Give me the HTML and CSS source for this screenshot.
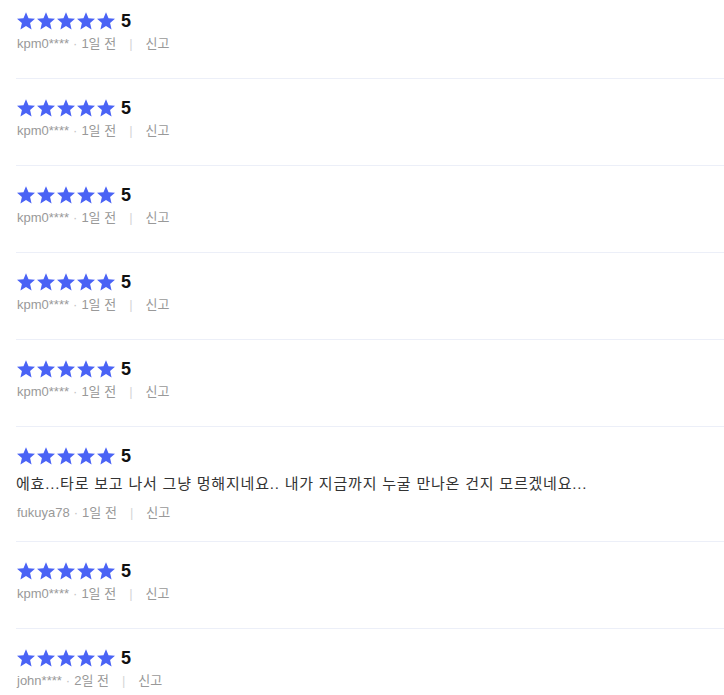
FILE: index.html
```html
<!DOCTYPE html>
<html lang="ko">

<head>
    <meta charset="utf-8">
    <title>리뷰</title>
    <link rel="stylesheet" href="styles.css">
</head>

<body>
    <svg class="defs" width="0" height="0">
        <symbol id="star" viewBox="2 2 20 19.3">
            <path d="M12 17.27L18.18 21l-1.64-7.03L22 9.24l-7.19-.61L12 2 9.19 8.63 2 9.24l5.46 4.73L5.82 21z" />
        </symbol>
    </svg>

    <ul class="review-list">
        <li class="review">
            <div class="rating">
                <span class="stars">
                    <svg class="star"><use href="#star" /></svg><svg class="star"><use href="#star" /></svg><svg class="star"><use href="#star" /></svg><svg class="star"><use href="#star" /></svg><svg class="star"><use href="#star" /></svg>
                </span>
                <span class="score">5</span>
            </div>
            <div class="meta"><span class="user">kpm0****</span><span class="dot">·</span><span>1일 전</span><span class="bar">|</span><a class="report" href="#">신고</a></div>
        </li>
        <li class="review">
            <div class="rating">
                <span class="stars">
                    <svg class="star"><use href="#star" /></svg><svg class="star"><use href="#star" /></svg><svg class="star"><use href="#star" /></svg><svg class="star"><use href="#star" /></svg><svg class="star"><use href="#star" /></svg>
                </span>
                <span class="score">5</span>
            </div>
            <div class="meta"><span class="user">kpm0****</span><span class="dot">·</span><span>1일 전</span><span class="bar">|</span><a class="report" href="#">신고</a></div>
        </li>
        <li class="review">
            <div class="rating">
                <span class="stars">
                    <svg class="star"><use href="#star" /></svg><svg class="star"><use href="#star" /></svg><svg class="star"><use href="#star" /></svg><svg class="star"><use href="#star" /></svg><svg class="star"><use href="#star" /></svg>
                </span>
                <span class="score">5</span>
            </div>
            <div class="meta"><span class="user">kpm0****</span><span class="dot">·</span><span>1일 전</span><span class="bar">|</span><a class="report" href="#">신고</a></div>
        </li>
        <li class="review">
            <div class="rating">
                <span class="stars">
                    <svg class="star"><use href="#star" /></svg><svg class="star"><use href="#star" /></svg><svg class="star"><use href="#star" /></svg><svg class="star"><use href="#star" /></svg><svg class="star"><use href="#star" /></svg>
                </span>
                <span class="score">5</span>
            </div>
            <div class="meta"><span class="user">kpm0****</span><span class="dot">·</span><span>1일 전</span><span class="bar">|</span><a class="report" href="#">신고</a></div>
        </li>
        <li class="review">
            <div class="rating">
                <span class="stars">
                    <svg class="star"><use href="#star" /></svg><svg class="star"><use href="#star" /></svg><svg class="star"><use href="#star" /></svg><svg class="star"><use href="#star" /></svg><svg class="star"><use href="#star" /></svg>
                </span>
                <span class="score">5</span>
            </div>
            <div class="meta"><span class="user">kpm0****</span><span class="dot">·</span><span>1일 전</span><span class="bar">|</span><a class="report" href="#">신고</a></div>
        </li>
        <li class="review has-text">
            <div class="rating">
                <span class="stars">
                    <svg class="star"><use href="#star" /></svg><svg class="star"><use href="#star" /></svg><svg class="star"><use href="#star" /></svg><svg class="star"><use href="#star" /></svg><svg class="star"><use href="#star" /></svg>
                </span>
                <span class="score">5</span>
            </div>
            <p class="review-text">에효...타로 보고 나서 그냥 멍해지네요.. 내가 지금까지 누굴 만나온 건지 모르겠네요...</p>
            <div class="meta"><span class="user">fukuya78</span><span class="dot">·</span><span>1일 전</span><span class="bar">|</span><a class="report" href="#">신고</a></div>
        </li>
        <li class="review">
            <div class="rating">
                <span class="stars">
                    <svg class="star"><use href="#star" /></svg><svg class="star"><use href="#star" /></svg><svg class="star"><use href="#star" /></svg><svg class="star"><use href="#star" /></svg><svg class="star"><use href="#star" /></svg>
                </span>
                <span class="score">5</span>
            </div>
            <div class="meta"><span class="user">kpm0****</span><span class="dot">·</span><span>1일 전</span><span class="bar">|</span><a class="report" href="#">신고</a></div>
        </li>
        <li class="review">
            <div class="rating">
                <span class="stars">
                    <svg class="star"><use href="#star" /></svg><svg class="star"><use href="#star" /></svg><svg class="star"><use href="#star" /></svg><svg class="star"><use href="#star" /></svg><svg class="star"><use href="#star" /></svg>
                </span>
                <span class="score">5</span>
            </div>
            <div class="meta"><span class="user">john****</span><span class="dot">·</span><span>2일 전</span><span class="bar">|</span><a class="report" href="#">신고</a></div>
        </li>
    </ul>
</body>

</html>
```

FILE: styles.css
```css
body {
    margin: 0;
    background: #fff;
    font-family: "Liberation Sans", "Noto Sans CJK KR", sans-serif;
    color: #333;
}

.defs {
    position: absolute;
}

.review-list {
    list-style: none;
    margin: 0;
    padding: 0 0 0 16px;
}

.review {
    padding: 20px 0 24px;
    border-bottom: 1px solid #eceff8;
}

.review:first-child {
    padding-top: 12px;
}

.review.has-text {
    padding-bottom: 18px;
}

.rating {
    display: flex;
    align-items: center;
    height: 18px;
}

.stars {
    display: flex;
    gap: 2px;
    padding-left: 1px;
}

.star {
    width: 18px;
    height: 18px;
    fill: #4a63f5;
}

.score {
    margin-left: 6px;
    font-size: 18px;
    font-weight: bold;
    color: #111;
    line-height: 18px;
}

.review-text {
    margin: 8px 0 8px;
    font-size: 15px;
    line-height: 22px;
    letter-spacing: 0.8px;
    color: #333;
}

.meta {
    margin-top: 4px;
    font-size: 13px;
    line-height: 20px;
    color: #999;
}

.review-text + .meta {
    margin-top: 0;
}

.user {
    padding-left: 1px;
}

.dot {
    margin: 0 4px;
    color: #c4c4c4;
}

.bar {
    margin: 0 13px;
    color: #d6d6d6;
}

.report {
    color: #999;
    text-decoration: none;
}
```
